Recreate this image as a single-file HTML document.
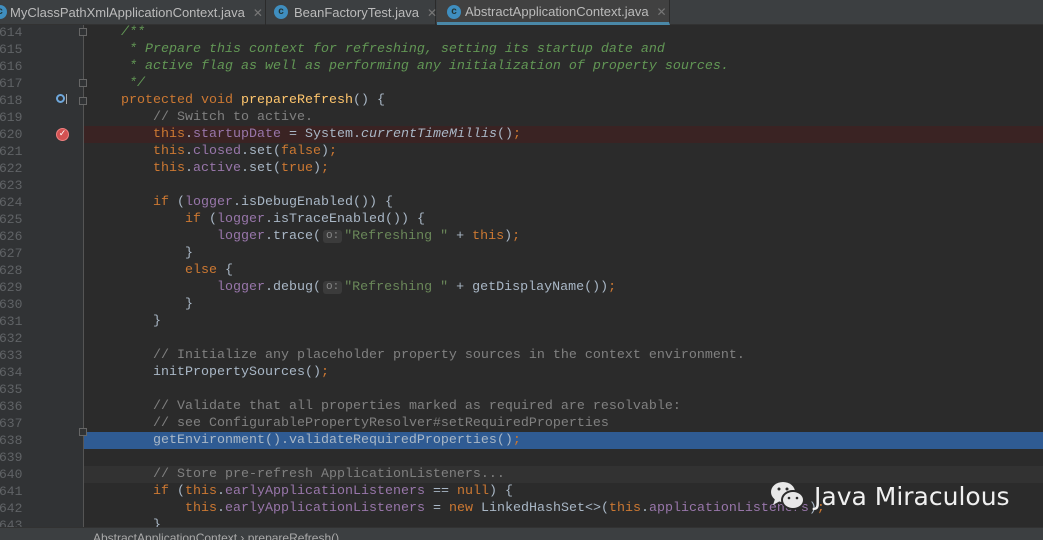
<!DOCTYPE html>
<html><head><meta charset="utf-8"><style>
*{margin:0;padding:0;box-sizing:border-box}
body{width:1043px;height:540px;overflow:hidden;background:#2b2b2b;position:relative;font-family:"Liberation Mono",monospace;font-size:13.33px}
.tabs{position:absolute;left:0;top:0;width:1043px;height:25px;background:#3c3f41;border-bottom:1px solid #323232}
.tab{position:absolute;top:0;height:25px;font-family:"Liberation Sans",sans-serif;font-size:13px;color:#bbb;line-height:25px;border-right:1px solid #2b2b2b}
.tab .ic{position:absolute;top:5px;width:14px;height:14px;border-radius:50%;background:#3f8ebf;color:#233;font-size:10px;line-height:14px;text-align:center;font-weight:bold}
.tab .x{color:#777;margin-left:8px;font-size:12px}
.gut{position:absolute;left:0;top:25px;width:84px;height:502px;background:#313335;border-right:1px solid #555}
.ln{position:absolute;left:-1px;width:22px;text-align:right;color:#606366;font-size:13px;height:17px;line-height:17px}
.row{position:absolute;left:0;width:1043px;height:17px}
.code{position:absolute;left:121px;height:17px;line-height:17px;white-space:pre;color:#a9b7c6}
.k{color:#cc7832}.f{color:#9876aa}.c{color:#808080}.d{color:#629755;font-style:italic}.s{color:#6a8759}.m{color:#ffc66d}.i{font-style:italic}
.h{display:inline-block;background:#3b3b3b;color:#888;border-radius:3px;font-size:11px;line-height:13px;padding:0 3px;margin:0 2px;vertical-align:1px}
.fold{position:absolute;left:79px;width:8px;height:8px;border:1px solid #666;background:#313335}
.bar{position:absolute;left:0;top:527px;width:1043px;height:13px;background:#3c3f41;border-top:1px solid #323232;font-family:"Liberation Sans",sans-serif;font-size:12px;color:#aaa;line-height:20px;padding-left:93px;overflow:hidden}
</style></head><body>
<div class="tabs">
 <div class="tab" style="left:-4px;width:270px;padding-left:14px"><span class="ic" style="left:-3px">c</span>MyClassPathXmlApplicationContext.java<span class="x">✕</span></div>
 <div class="tab" style="left:266px;width:170px;padding-left:28px"><span class="ic" style="left:8px">c</span>BeanFactoryTest.java<span class="x">✕</span></div>
 <div class="tab" style="left:437px;width:233px;padding-left:28px;background:#414141;border-bottom:3px solid #4a88a8;height:25px;line-height:23px"><span class="ic" style="left:10px">c</span>AbstractApplicationContext.java<span class="x">✕</span></div>
</div>
<div class="gut"></div>
<div class="row" style="top:126px;background:#3a2323;left:84px"></div>
<div class="row" style="top:432px;background:#2f5b93;left:84px"></div>
<div class="row" style="top:466px;background:#323232;left:84px"></div>
<div style="position:absolute;left:56px;top:128px;width:13px;height:13px;border-radius:50%;background:#d25252;border:1px solid #f08080;color:#fff;font-size:9px;line-height:11px;text-align:center">✓</div>
<div style="position:absolute;left:56px;top:94px;width:9px;height:9px;border-radius:50%;border:2px solid #6fa8dc"></div>
<div style="position:absolute;left:66px;top:94px;width:1px;height:10px;background:#aaa"></div>
<div class="fold" style="top:28px"></div><div class="fold" style="top:79px"></div><div class="fold" style="top:97px"></div><div class="fold" style="top:428px"></div>
<div class="ln" style="top:24px">614</div><div class="code" style="top:24px"><span class="d">/**</span></div>
<div class="ln" style="top:41px">615</div><div class="code" style="top:41px"><span class="d"> * Prepare this context for refreshing, setting its startup date and</span></div>
<div class="ln" style="top:58px">616</div><div class="code" style="top:58px"><span class="d"> * active flag as well as performing any initialization of property sources.</span></div>
<div class="ln" style="top:75px">617</div><div class="code" style="top:75px"><span class="d"> */</span></div>
<div class="ln" style="top:92px">618</div><div class="code" style="top:92px"><span class="k">protected void </span><span class="m">prepareRefresh</span>() {</div>
<div class="ln" style="top:109px">619</div><div class="code" style="top:109px">    <span class="c">// Switch to active.</span></div>
<div class="ln" style="top:126px">620</div><div class="code" style="top:126px">    <span class="k">this</span>.<span class="f">startupDate</span> = System.<span class="i">currentTimeMillis</span>()<span class="k">;</span></div>
<div class="ln" style="top:143px">621</div><div class="code" style="top:143px">    <span class="k">this</span>.<span class="f">closed</span>.set(<span class="k">false</span>)<span class="k">;</span></div>
<div class="ln" style="top:160px">622</div><div class="code" style="top:160px">    <span class="k">this</span>.<span class="f">active</span>.set(<span class="k">true</span>)<span class="k">;</span></div>
<div class="ln" style="top:177px">623</div>
<div class="ln" style="top:194px">624</div><div class="code" style="top:194px">    <span class="k">if </span>(<span class="f">logger</span>.isDebugEnabled()) {</div>
<div class="ln" style="top:211px">625</div><div class="code" style="top:211px">        <span class="k">if </span>(<span class="f">logger</span>.isTraceEnabled()) {</div>
<div class="ln" style="top:228px">626</div><div class="code" style="top:228px">            <span class="f">logger</span>.trace(<span class="h">o:</span><span class="s">"Refreshing "</span> + <span class="k">this</span>)<span class="k">;</span></div>
<div class="ln" style="top:245px">627</div><div class="code" style="top:245px">        }</div>
<div class="ln" style="top:262px">628</div><div class="code" style="top:262px">        <span class="k">else </span>{</div>
<div class="ln" style="top:279px">629</div><div class="code" style="top:279px">            <span class="f">logger</span>.debug(<span class="h">o:</span><span class="s">"Refreshing "</span> + getDisplayName())<span class="k">;</span></div>
<div class="ln" style="top:296px">630</div><div class="code" style="top:296px">        }</div>
<div class="ln" style="top:313px">631</div><div class="code" style="top:313px">    }</div>
<div class="ln" style="top:330px">632</div>
<div class="ln" style="top:347px">633</div><div class="code" style="top:347px">    <span class="c">// Initialize any placeholder property sources in the context environment.</span></div>
<div class="ln" style="top:364px">634</div><div class="code" style="top:364px">    initPropertySources()<span class="k">;</span></div>
<div class="ln" style="top:381px">635</div>
<div class="ln" style="top:398px">636</div><div class="code" style="top:398px">    <span class="c">// Validate that all properties marked as required are resolvable:</span></div>
<div class="ln" style="top:415px">637</div><div class="code" style="top:415px">    <span class="c">// see ConfigurablePropertyResolver#setRequiredProperties</span></div>
<div class="ln" style="top:432px">638</div><div class="code" style="top:432px">    getEnvironment().validateRequiredProperties()<span class="k">;</span></div>
<div class="ln" style="top:449px">639</div>
<div class="ln" style="top:466px">640</div><div class="code" style="top:466px">    <span class="c">// Store pre-refresh ApplicationListeners...</span></div>
<div class="ln" style="top:483px">641</div><div class="code" style="top:483px">    <span class="k">if </span>(<span class="k">this</span>.<span class="f">earlyApplicationListeners</span> == <span class="k">null</span>) {</div>
<div class="ln" style="top:500px">642</div><div class="code" style="top:500px">        <span class="k">this</span>.<span class="f">earlyApplicationListeners</span> = <span class="k">new </span>LinkedHashSet&lt;&gt;(<span class="k">this</span>.<span class="f">applicationListeners</span>)<span class="k">;</span></div>
<div class="ln" style="top:517px">643</div><div class="code" style="top:517px">    }</div>
<div class="bar">AbstractApplicationContext  ›  prepareRefresh()</div>
<svg style="position:absolute;left:768px;top:480px" width="40" height="32" viewBox="0 0 40 32">
<ellipse cx="15" cy="12" rx="12" ry="10" fill="#e8e8e8"/><path d="M7 19 L5 25 L12 21Z" fill="#e8e8e8"/>
<ellipse cx="25" cy="20" rx="11" ry="9" fill="#e8e8e8" stroke="#2b2b2b" stroke-width="2"/>
<circle cx="11" cy="9" r="1.5" fill="#2b2b2b"/><circle cx="19" cy="9" r="1.5" fill="#2b2b2b"/>
<circle cx="21" cy="18" r="1.3" fill="#2b2b2b"/><circle cx="29" cy="18" r="1.3" fill="#2b2b2b"/>
</svg>
<div style="position:absolute;left:814px;top:479px;font-family:'DejaVu Sans','Liberation Sans',sans-serif;font-size:25px;color:#f0f0f0;line-height:36px">Java Miraculous</div>
</body></html>
